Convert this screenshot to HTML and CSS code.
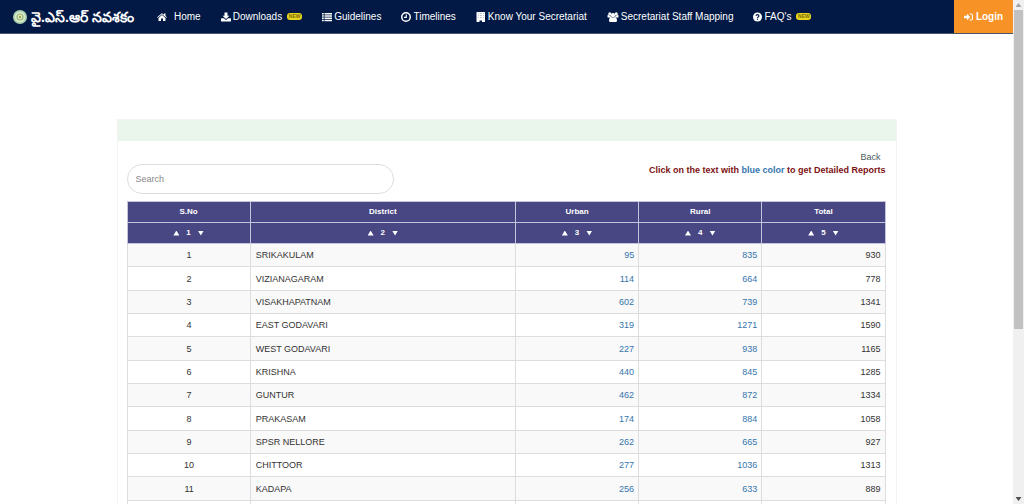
FILE: index.html
```html
<!DOCTYPE html>
<html lang="en">
<head>
<meta charset="utf-8">
<title>Navasakam</title>
<link rel="stylesheet" href="styles.css">
</head>
<body>
<div class="page">
  <header class="navbar">
    <a class="brand" href="#">
      <svg class="brand-logo" viewBox="0 0 14 14"><circle cx="7" cy="7" r="7" fill="#a9cfae"/><circle cx="7" cy="7" r="5.3" fill="#dcebc9"/><circle cx="7" cy="7" r="3.6" fill="#8fb88a"/><circle cx="7" cy="7" r="2.4" fill="#e9e3a4"/><circle cx="7" cy="7" r="1" fill="#6d9a5c"/></svg>
      <span class="brand-name" lang="te">వై.ఎస్.ఆర్ నవశకం</span>
    </a>
    <nav class="menu">
      <a class="menu-item menu-home" href="#"><svg class="icon" viewBox="0 0 20 20"><path d="M10 5.800 3 11.800v5.500c0 .5.3.7.7.7H8v-4.800h4V18h4.300c.4 0 .7-.2.7-.7v-5.500zM19.800 10.300 17 8V2.800h-3v2.700L11 3q-1-.7-2 0L.2 10.300l1.100 1.400L10 4.500l8.700 7.200z"/></svg>Home</a>
      <a class="menu-item" href="#"><svg class="icon" viewBox="0 0 20 20"><path d="M7 1h6v6.500h4L10 14 3 7.500h4zM1 12.500h5l2.300 2.300q1.700 1.400 3.400 0l2.300-2.300h5q1 0 1 1V18q0 1-1 1H1q-1 0-1-1v-4.500q0-1 1-1z"/></svg>Downloads <span class="new">NEW</span></a>
      <a class="menu-item" href="#"><svg class="icon" viewBox="0 0 20 20"><path d="M0 2h3.500v3H0zM5 2h15v3H5zM0 6.500h3.500v3H0zM5 6.500h15v3H5zM0 11h3.500v3H0zM5 11h15v3H5zM0 15.500h3.500v3H0zM5 15.500h15v3H5z"/></svg>Guidelines</a>
      <a class="menu-item" href="#"><svg class="icon" viewBox="1 1 18 18"><path fill-rule="evenodd" d="M10 1a9 9 0 1 1 0 18 9 9 0 0 1 0-18zm0 2.700a6.300 6.300 0 1 0 0 12.600 6.300 6.300 0 0 0 0-12.600zM9.500 5.500h2v6.200H6.500v-2h3z"/></svg>Timelines</a>
      <a class="menu-item" href="#"><svg class="icon" viewBox="0 0 20 20"><path fill-rule="evenodd" d="M2 0h15q1 0 1 1v18q0 1-1 1h-5v-3H7v3H2q-1 0-1-1V1q0-1 1-1zM5 3v1h1V3zM8 3v1h1V3zM11 3v1h1V3zM14 3v1h1V3zM5 7v1h1V7zM8 7v1h1V7zM11 7v1h1V7zM14 7v1h1V7zM5 11v1h1v-1zM8 11v1h1v-1zM11 11v1h1v-1zM14 11v1h1v-1z"/></svg>Know Your Secretariat</a>
      <a class="menu-item" href="#"><svg class="icon icon-wide" viewBox="0 0 22 20"><circle cx="4.500" cy="3.500" r="3"/><circle cx="17.500" cy="3.500" r="3"/><circle cx="11" cy="6.500" r="4.300"/><path d="M0 10V8q0-2.500 1.300-2.500Q4 7.500 6 6.600q0 2.600 1.300 4.400H1.500Q0 11 0 10zM22 10V8q0-2.500-1.300-2.500Q18 7.500 16 6.600q0 2.600-1.300 4.400h5.800q1.500 0 1.500-1zM7.500 10q3.500 2.500 7 0 4 .5 4.500 7 0 3-2.500 3h-11q-2.500 0-2.500-3 .5-6.500 4.500-7z"/></svg>Secretariat Staff Mapping</a>
      <a class="menu-item" href="#"><svg class="icon icon-narrow" viewBox="1 1 18 18"><circle cx="10" cy="10" r="9"/><path d="M7 7.800Q7.300 5.200 10 5.200t2.900 2.400q0 1.400-1.500 2.200-1.400.8-1.400 2" fill="none" stroke="#011944" stroke-width="2.300"/><path fill="#011944" d="M8.800 13.300h2.400v2.400H8.800z"/></svg>FAQ's <span class="new">NEW</span></a>
    </nav>
    <a class="login" href="#"><svg class="icon icon-narrow" viewBox="0 1 20 18"><path d="M6.500 3v4H1q-1 0-1 1v4q0 1 1 1h5.500v4l7.500-7zM12.500 2h3.500Q20 2 20 6v8q0 4-4 4h-3.500v-2.500H16q1.500 0 1.500-1.500V6q0-1.500-1.500-1.500h-3.500z"/></svg>Login</a>
  </header>
  <main class="panel">
    <div class="panel-heading"></div>
    <div class="panel-body">
      <div class="toolbar">
        <input class="search" type="text" placeholder="Search" aria-label="Search">
        <div class="notes">
          <a class="back" href="#">Back</a>
          <p class="hint">Click on the text with <span class="hint-blue">blue color</span> to get Detailed Reports</p>
        </div>
      </div>
      <table class="report">
        <colgroup><col class="col-number"><col class="col-district"><col class="col-number"><col class="col-number"><col class="col-number"></colgroup>
        <thead>
          <tr><th>S.No</th><th>District</th><th>Urban</th><th>Rural</th><th>Total</th></tr>
          <tr>
            <th><span class="sort"><i class="up"></i>1<i class="down"></i></span></th>
            <th><span class="sort"><i class="up"></i>2<i class="down"></i></span></th>
            <th><span class="sort"><i class="up"></i>3<i class="down"></i></span></th>
            <th><span class="sort"><i class="up"></i>4<i class="down"></i></span></th>
            <th><span class="sort"><i class="up"></i>5<i class="down"></i></span></th>
          </tr>
        </thead>
        <tbody>
          <tr><td>1</td><td>SRIKAKULAM</td><td><a href="#">95</a></td><td><a href="#">835</a></td><td>930</td></tr>
          <tr><td>2</td><td>VIZIANAGARAM</td><td><a href="#">114</a></td><td><a href="#">664</a></td><td>778</td></tr>
          <tr><td>3</td><td>VISAKHAPATNAM</td><td><a href="#">602</a></td><td><a href="#">739</a></td><td>1341</td></tr>
          <tr><td>4</td><td>EAST GODAVARI</td><td><a href="#">319</a></td><td><a href="#">1271</a></td><td>1590</td></tr>
          <tr><td>5</td><td>WEST GODAVARI</td><td><a href="#">227</a></td><td><a href="#">938</a></td><td>1165</td></tr>
          <tr><td>6</td><td>KRISHNA</td><td><a href="#">440</a></td><td><a href="#">845</a></td><td>1285</td></tr>
          <tr><td>7</td><td>GUNTUR</td><td><a href="#">462</a></td><td><a href="#">872</a></td><td>1334</td></tr>
          <tr><td>8</td><td>PRAKASAM</td><td><a href="#">174</a></td><td><a href="#">884</a></td><td>1058</td></tr>
          <tr><td>9</td><td>SPSR NELLORE</td><td><a href="#">262</a></td><td><a href="#">665</a></td><td>927</td></tr>
          <tr><td>10</td><td>CHITTOOR</td><td><a href="#">277</a></td><td><a href="#">1036</a></td><td>1313</td></tr>
          <tr><td>11</td><td>KADAPA</td><td><a href="#">256</a></td><td><a href="#">633</a></td><td>889</td></tr>
          <tr><td></td><td></td><td></td><td></td><td></td></tr>
        </tbody>
      </table>
    </div>
  </main>
</div>
<div class="scrollbar" aria-hidden="true"><i class="up arrow-off"></i><div class="thumb"></div><i class="down arrow-on"></i></div>
</body>
</html>
```
FILE: styles.css
```css
* { box-sizing: border-box; }
body {
  margin: 0;
  height: 100vh;
  overflow: hidden;
  display: flex;
  background: #fff;
  color: #333;
  font: 9px/14px "Liberation Sans", Arial, sans-serif;
}
a { color: #3575ad; text-decoration: none; }
.page { flex: 1; min-width: 0; overflow: hidden; }

.navbar {
  display: flex;
  align-items: stretch;
  height: 34px;
  padding-left: 13px;
  background: #011944;
  border-bottom: 1px solid #4a5468;
  font-size: 10px;
}
.brand, .menu, .menu-item, .login { display: flex; align-items: center; }
.brand { width: 144px; gap: 4px; color: #fff; white-space: nowrap; }
.brand-logo { width: 14px; height: 14px; flex: none; }
.brand-name { font-size: 14px; line-height: 20px; font-weight: bold; }
.menu { flex: 1; gap: 20px; white-space: nowrap; }
.menu-item { color: #fff; gap: 2px; }
.menu-home { gap: 7px; }
.icon { width: 10px; height: 10px; fill: #fff; flex: none; }
.icon-narrow { width: 9px; }
.icon-wide { width: 12px; }
.new {
  width: 15px;
  height: 7px;
  margin-left: 3px;
  border-radius: 3px;
  background: #e8d61c;
  color: #7a6a10;
  font-size: 5px;
  line-height: 7px;
  font-weight: bold;
  text-align: center;
}
.login {
  width: 59px;
  justify-content: center;
  gap: 3px;
  background: #f79226;
  color: #fff;
  font-weight: bold;
}

.panel { width: 77%; margin: 85px auto 0; border: 1px solid #f3f3f3; }
.panel-heading { height: 21px; background: #eaf5ec; }
.panel-body { padding: 10px 10px 0 9px; }
.toolbar { display: flex; justify-content: space-between; align-items: flex-start; height: 50px; }
.search {
  width: 267px;
  height: 30px;
  margin-top: 13px;
  padding: 0 8px;
  border: 1px solid #ddd;
  border-radius: 15px;
  background: #fff;
  color: #444;
  font: inherit;
}
.search::placeholder { color: #888; opacity: 1; }
.notes { text-align: right; line-height: 13px; }
.back { display: block; margin-right: 5px; color: #4c5a60; }
.hint { margin: 0; color: #7d1013; font-weight: bold; }
.hint-blue { color: #3575ad; }

.report { width: 100%; border-collapse: collapse; table-layout: fixed; }
.col-district { width: 35%; }
.report th {
  height: 21px;
  padding: 0;
  border: 1px solid #c4c4da;
  background: #484683;
  color: #fff;
  font-size: 8px;
  line-height: 12px;
}
.sort { display: flex; justify-content: center; align-items: center; gap: 7px; }
.up, .down { width: 6px; height: 5px; background: currentColor; }
.up { clip-path: polygon(50% 0, 100% 100%, 0 100%); }
.down { clip-path: polygon(0 0, 100% 0, 50% 100%); }
.report td { height: 23px; padding: 0 4px 0 5px; border: 1px solid #ddd; text-align: right; }
.report tbody tr:nth-child(3n + 2) td { height: 24px; }
.report tbody tr:nth-child(odd) { background: #f9f9f9; }
.report td:nth-child(1) { text-align: center; }
.report td:nth-child(2) { text-align: left; }

.scrollbar {
  display: flex;
  flex-direction: column;
  align-items: center;
  width: 11px;
  padding: 3px 0;
  background: #f0f0f0;
}
.thumb { width: 9px; height: 64%; margin: 3px 0 auto; background: #c1c1c1; }
.arrow-off { height: 4px; color: #a3a3a3; }
.arrow-on { height: 4px; color: #505050; }
```
